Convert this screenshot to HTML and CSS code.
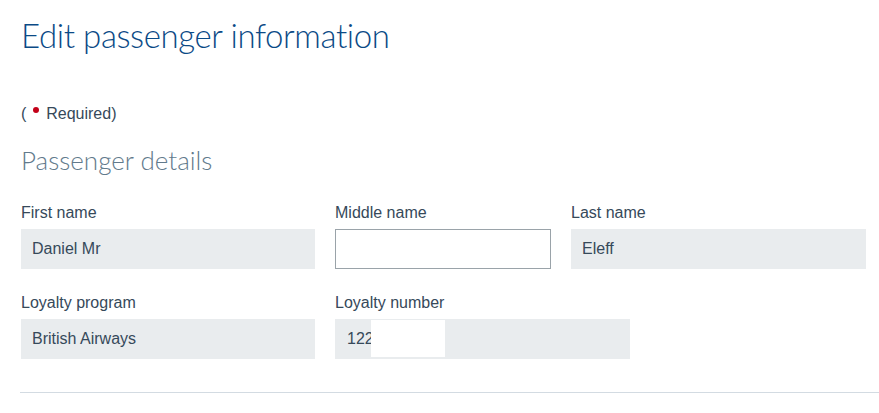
FILE: index.html
```html
<!DOCTYPE html>
<html>
<head>
<meta charset="utf-8">
<link rel="stylesheet" href="styles.css">
</head>
<body>
<div class="page">
  <h1 class="title">Edit passenger information</h1>
  <p class="required">( <span class="dot"></span> Required)</p>
  <h2 class="section">Passenger details</h2>
  <div class="row">
    <div class="field w1">
      <label class="label">First name</label>
      <div class="input readonly">Daniel Mr</div>
    </div>
    <div class="field w2">
      <label class="label">Middle name</label>
      <div class="input editable"></div>
    </div>
    <div class="field w3">
      <label class="label">Last name</label>
      <div class="input readonly">Eleff</div>
    </div>
  </div>
  <div class="row row2">
    <div class="field w1">
      <label class="label">Loyalty program</label>
      <div class="input readonly">British Airways</div>
    </div>
    <div class="field w3">
      <label class="label">Loyalty number</label>
      <div class="input readonly number">122<span class="redact"></span></div>
    </div>
  </div>
  <hr class="divider">
</div>
</body>
</html>
```

FILE: styles.css
```css
html, body {
  margin: 0;
  padding: 0;
  background: #ffffff;
}
.page {
  padding: 13px 0 0 21px;
  font-family: "Liberation Sans", Arial, sans-serif;
  color: #36495a;
}
.title {
  margin: 0;
  font-family: Lato, "Open Sans", sans-serif;
  font-weight: 300;
  font-size: 33px;
  letter-spacing: -0.4px;
  line-height: 44px;
  color: #0b4a86;
}
.required {
  margin: 48px 0 0;
  font-size: 16px;
  line-height: 18px;
}
.dot {
  display: inline-block;
  width: 6px;
  height: 6px;
  border-radius: 50%;
  background: #c30019;
  vertical-align: 6px;
  margin: 0 3px 0 2px;
}
.section {
  margin: 21px 0 0;
  font-family: Lato, "Open Sans", sans-serif;
  font-weight: 300;
  font-size: 26px;
  line-height: 32px;
  color: #627a8c;
}
.row {
  display: flex;
  gap: 20px;
  margin-top: 28px;
}
.row2 {
  margin-top: 25px;
}
.field {
  display: flex;
  flex-direction: column;
}
.w1 { width: 294px; }
.w2 { width: 216px; }
.w3 { width: 295px; }
.label {
  font-size: 16px;
  line-height: 18px;
  margin-bottom: 7px;
}
.input {
  box-sizing: border-box;
  height: 40px;
  padding: 0 11px;
  font-size: 16px;
  line-height: 40px;
  display: flex;
  align-items: center;
}
.readonly {
  background: #e9ecee;
}
.editable {
  background: #fff;
  border: 1px solid #9aa3a9;
}
.number {
  padding-left: 12px;
}
.redact {
  display: inline-block;
  width: 74px;
  height: 37px;
  background: #fff;
  margin: -1px 0 0 -3px;
}
.divider {
  border: 0;
  border-top: 1px solid #d3dbe2;
  margin: 33px 0 0 -1px;
}
```
